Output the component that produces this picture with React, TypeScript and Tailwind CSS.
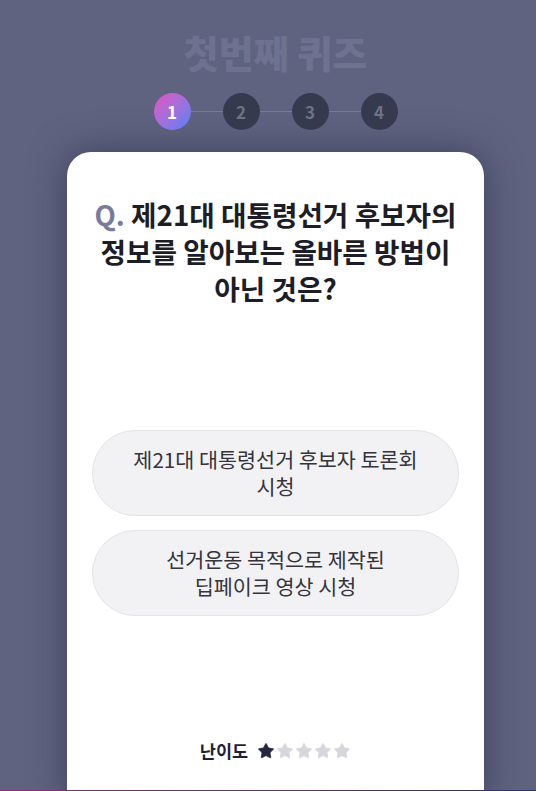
import { Star } from "lucide-react";

const steps = [1, 2, 3, 4];

const options = [
  ["제21대 대통령선거 후보자 토론회", "시청"],
  ["선거운동 목적으로 제작된", "딥페이크 영상 시청"],
];

const font = { fontFamily: '"Noto Sans CJK KR", "Noto Sans", sans-serif' };

function Stepper({ current }: { current: number }) {
  return (
    <div className="flex items-center justify-center">
      {steps.map((n, i) => (
        <div key={n} className="flex items-center">
          {i > 0 && <div className="h-px w-[32px] bg-[#767a96]" />}
          {n === current ? (
            <div className="flex h-[37px] w-[37px] items-center justify-center rounded-full bg-gradient-to-br from-[#e04fc0] to-[#4b7ef7] text-[17px] font-bold text-white">
              {n}
            </div>
          ) : (
            <div className="flex h-[37px] w-[37px] items-center justify-center rounded-full bg-[#363a4e] text-[17px] font-bold text-[#6e7286]">
              {n}
            </div>
          )}
        </div>
      ))}
    </div>
  );
}

export default function App() {
  return (
    <div style={font} className="relative h-[791px] w-full overflow-hidden bg-[#5f6380] pl-[15px]">
      <h1 className="pt-[27px] text-center text-[38px] font-black leading-[50px] text-[#6e7291]">
        첫번째 퀴즈
      </h1>

      <div className="mt-[16px]">
        <Stepper current={1} />
      </div>

      {/* 문제 카드 */}
      <div className="mx-auto mt-[22px] h-[660px] w-[417px] rounded-[24px] bg-white px-[20px] pt-[44px] shadow-[0_0_36px_rgba(35,36,60,0.55)]">
        <p className="text-center text-[27.7px] font-bold leading-[37px] text-[#1d1d27]">
          <span className="text-[#7a7b9c]">Q.</span> 제21대 대통령선거 후보자의
          <br />
          정보를 알아보는 올바른 방법이
          <br />
          아닌 것은?
        </p>

        <div className="mt-[123px] flex flex-col gap-[14px]">
          {options.map((lines) => (
            <button
              key={lines[0]}
              className="h-[86px] w-[367px] self-center rounded-full border border-[#e3e3e8] bg-[#f2f2f4] text-center text-[20.7px] leading-[27px] text-[#35343c]"
            >
              {lines[0]}
              <br />
              {lines[1]}
            </button>
          ))}
        </div>

        <div className="mt-[122px] flex items-center justify-center gap-[9px]">
          <span className="text-[17.5px] font-bold text-[#1f1f3a]">난이도</span>
          <div className="flex items-center gap-[1px]">
            {[0, 1, 2, 3, 4].map((i) => (
              <Star
                key={i}
                size={18}
                strokeWidth={1}
                className={i === 0 ? "fill-[#25253f] text-[#25253f]" : "fill-[#d6d6de] text-[#d6d6de]"}
              />
            ))}
          </div>
        </div>
      </div>

      <div className="absolute bottom-0 left-0 h-px w-full bg-gradient-to-r from-[#8a2c73] to-[#2c3468]" />
    </div>
  );
}
